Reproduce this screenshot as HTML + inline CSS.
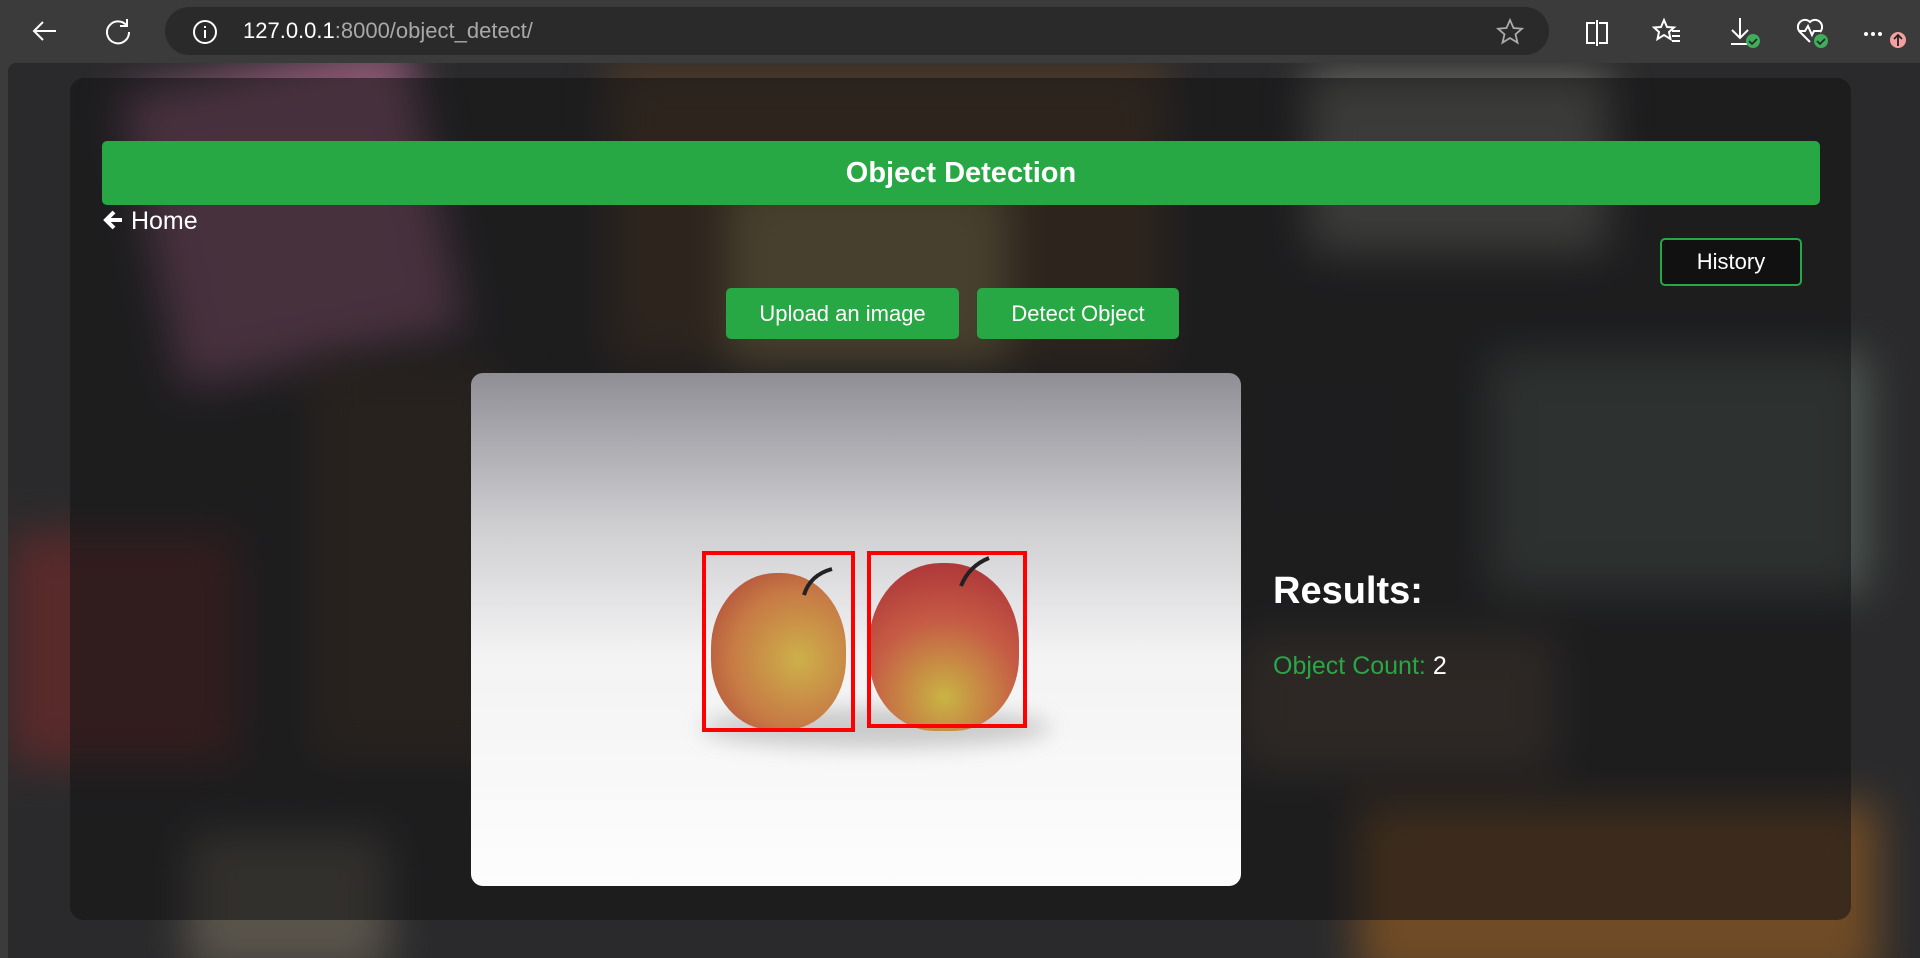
<!DOCTYPE html>
<html><head><meta charset="utf-8"><style>
*{margin:0;padding:0;box-sizing:border-box}
body{width:1920px;height:958px;overflow:hidden;background:#3b3b3b;font-family:"Liberation Sans",Arial,sans-serif;position:relative}
.tb{position:absolute;left:0;top:0;width:1920px;height:63px;background:#3b3b3b}
.addr{position:absolute;left:165px;top:7px;width:1384px;height:48px;border-radius:24px;background:#2a2a2a}
.url{position:absolute;left:243px;top:18px;font-size:22px;color:#fff}
.url span{color:#a8a8a8}
.page{position:absolute;left:8px;top:63px;width:1912px;height:895px;background:#2a2a2c;overflow:hidden;border-top-left-radius:8px}
.blob{position:absolute;filter:blur(22px);opacity:.7}
.panel{position:absolute;left:70px;top:78px;width:1781px;height:842px;background:rgba(18,18,20,0.55);border-radius:14px}
.green{position:absolute;left:102px;top:141px;width:1718px;height:64px;background:#28a745;border-radius:5px;color:#fff;font-weight:bold;font-size:29px;text-align:center;line-height:64px}
.home{position:absolute;left:102px;top:207px;color:#fff;font-size:25px}
.btn{position:absolute;background:#28a745;color:#fff;font-size:22px;text-align:center;border-radius:5px}
.hist{position:absolute;left:1660px;top:238px;width:142px;height:48px;border:2px solid #28a745;border-radius:5px;background:#111;color:#fff;font-size:22px;text-align:center;line-height:44px}
.img{position:absolute;left:471px;top:373px;width:770px;height:513px;border-radius:12px;overflow:hidden;background:linear-gradient(#8f8e95 0%,#cfcfd2 30%,#f3f3f4 55%,#fdfdfd 100%)}
.box{position:absolute;border:4px solid #f00}
.res{position:absolute;left:1273px;top:570px;color:#fff;font-weight:bold;font-size:38px}
.cnt{position:absolute;left:1273px;top:652px;font-size:25px;color:#28a745}
.cnt b{color:#fff;font-weight:normal}
</style></head><body>
<div class="tb">
<svg style="position:absolute;left:30px;top:16px" width="30" height="30" viewBox="0 0 30 30"><path d="M26 15H4M13 6l-9 9 9 9" stroke="#fff" stroke-width="2" fill="none"/></svg>
<svg style="position:absolute;left:103px;top:16px" width="30" height="30" viewBox="0 0 30 30"><path d="M24 10A11 11 0 1 0 26 16M24 3v7h-7" stroke="#fff" stroke-width="2" fill="none"/></svg>
<div class="addr"></div>
<svg style="position:absolute;left:192px;top:19px" width="26" height="26" viewBox="0 0 26 26"><circle cx="13" cy="13" r="11" stroke="#fff" stroke-width="2" fill="none"/><path d="M13 11v8M13 7v2" stroke="#fff" stroke-width="2"/></svg>
<div class="url">127.0.0.1<span>:8000/object_detect/</span></div>
<svg style="position:absolute;left:1496px;top:18px" width="28" height="28" viewBox="0 0 28 28"><path d="M14 2l3.5 8 8.5.7-6.5 5.6 2 8.4L14 20l-7.5 4.7 2-8.4L2 10.7l8.5-.7z" stroke="#aaa" stroke-width="1.8" fill="none"/></svg>
<svg style="position:absolute;left:1583px;top:19px" width="28" height="28" viewBox="0 0 28 28"><path d="M12 4H4v20h8M16 4h8v20h-8M14 1v26" stroke="#fff" stroke-width="2" fill="none"/></svg>
<svg style="position:absolute;left:1652px;top:17px" width="30" height="30" viewBox="0 0 30 30"><path d="M12 3l3 7 7 .5-5 4.5 1.5 7L12 18l-6.5 4 1.5-7-5-4.5 7-.5z" stroke="#fff" stroke-width="2" fill="none"/><path d="M20 14h8M20 19h8M20 24h8" stroke="#fff" stroke-width="2"/></svg>
<svg style="position:absolute;left:1728px;top:16px" width="36" height="34" viewBox="0 0 36 34"><path d="M12 2v20M4 14l8 8 8-8M3 28h17" stroke="#fff" stroke-width="2" fill="none"/><circle cx="25" cy="25" r="7" fill="#3fae5a"/><path d="M21 25l3 3 5-5" stroke="#222" stroke-width="1.6" fill="none"/></svg>
<svg style="position:absolute;left:1796px;top:16px" width="36" height="34" viewBox="0 0 36 34"><path d="M14 26L4 16a7 7 0 0 1 10-10 7 7 0 0 1 10 10M3 15h6l3-5 4 9 2-4h6" stroke="#fff" stroke-width="2" fill="none"/><circle cx="25" cy="25" r="7" fill="#3fae5a"/><path d="M21 25l3 3 5-5" stroke="#222" stroke-width="1.6" fill="none"/></svg>
<svg style="position:absolute;left:1862px;top:20px" width="46" height="30" viewBox="0 0 46 30"><circle cx="4" cy="14" r="2" fill="#fff"/><circle cx="11" cy="14" r="2" fill="#fff"/><circle cx="18" cy="14" r="2" fill="#fff"/><circle cx="36" cy="20" r="8" fill="#f4a0a0"/><path d="M36 26v-11M32 19l4-4 4 4" stroke="#222" stroke-width="1.8" fill="none"/></svg>
</div>
<div class="page">
<div class="blob" style="left:140px;top:0;width:290px;height:300px;background:#b06a8e;transform:rotate(-12deg)"></div>
<div class="blob" style="left:600px;top:0;width:560px;height:300px;background:#5e4228"></div>
<div class="blob" style="left:720px;top:120px;width:280px;height:180px;background:#a39460"></div>
<div class="blob" style="left:1300px;top:10px;width:300px;height:180px;background:#8a8a80"></div>
<div class="blob" style="left:1480px;top:290px;width:380px;height:240px;background:#5e6a62"></div>
<div class="blob" style="left:0;top:470px;width:230px;height:230px;background:#6e2a2a"></div>
<div class="blob" style="left:1230px;top:570px;width:320px;height:140px;background:#5e4e40"></div>
<div class="blob" style="left:1350px;top:740px;width:520px;height:180px;background:#8e5a24"></div>
<div class="blob" style="left:300px;top:300px;width:200px;height:400px;background:#4a3a2a"></div>
<div class="blob" style="left:180px;top:770px;width:200px;height:140px;background:#6e6658"></div>
</div>
<div class="panel"></div>
<div class="green">Object Detection</div>
<div class="home"><svg width="22" height="22" viewBox="0 0 22 22" style="vertical-align:-2px"><path d="M20 11H5M12 3l-8 8 8 8" stroke="#fff" stroke-width="4" fill="none"/></svg> Home</div>
<div class="hist">History</div>
<div class="btn" style="left:726px;top:288px;width:233px;height:51px;line-height:51px">Upload an image</div>
<div class="btn" style="left:977px;top:288px;width:202px;height:51px;line-height:51px">Detect Object</div>
<div class="img">
<div style="position:absolute;left:230px;top:335px;width:350px;height:40px;border-radius:50%;background:rgba(120,120,120,.35);filter:blur(10px)"></div>
<div style="position:absolute;left:240px;top:200px;width:135px;height:157px;border-radius:48% 48% 45% 45%;background:radial-gradient(circle at 65% 55%,#cdb04a,#c77a45 55%,#b04a3a 90%)"></div>
<div style="position:absolute;left:398px;top:190px;width:150px;height:168px;border-radius:48% 48% 44% 44%;background:radial-gradient(circle at 50% 80%,#c9b444,#c65c45 50%,#b03a3a 85%)"></div>
<svg style="position:absolute;left:0;top:0" width="770" height="513"><path d="M333 222q6-20 28-26M490 213q8-20 28-28" stroke="#222" stroke-width="4" fill="none"/></svg>
<div class="box" style="left:231px;top:178px;width:153px;height:181px"></div>
<div class="box" style="left:396px;top:178px;width:160px;height:177px"></div>
</div>
<div class="res">Results:</div>
<div class="cnt">Object Count: <b>2</b></div>
</body></html>
